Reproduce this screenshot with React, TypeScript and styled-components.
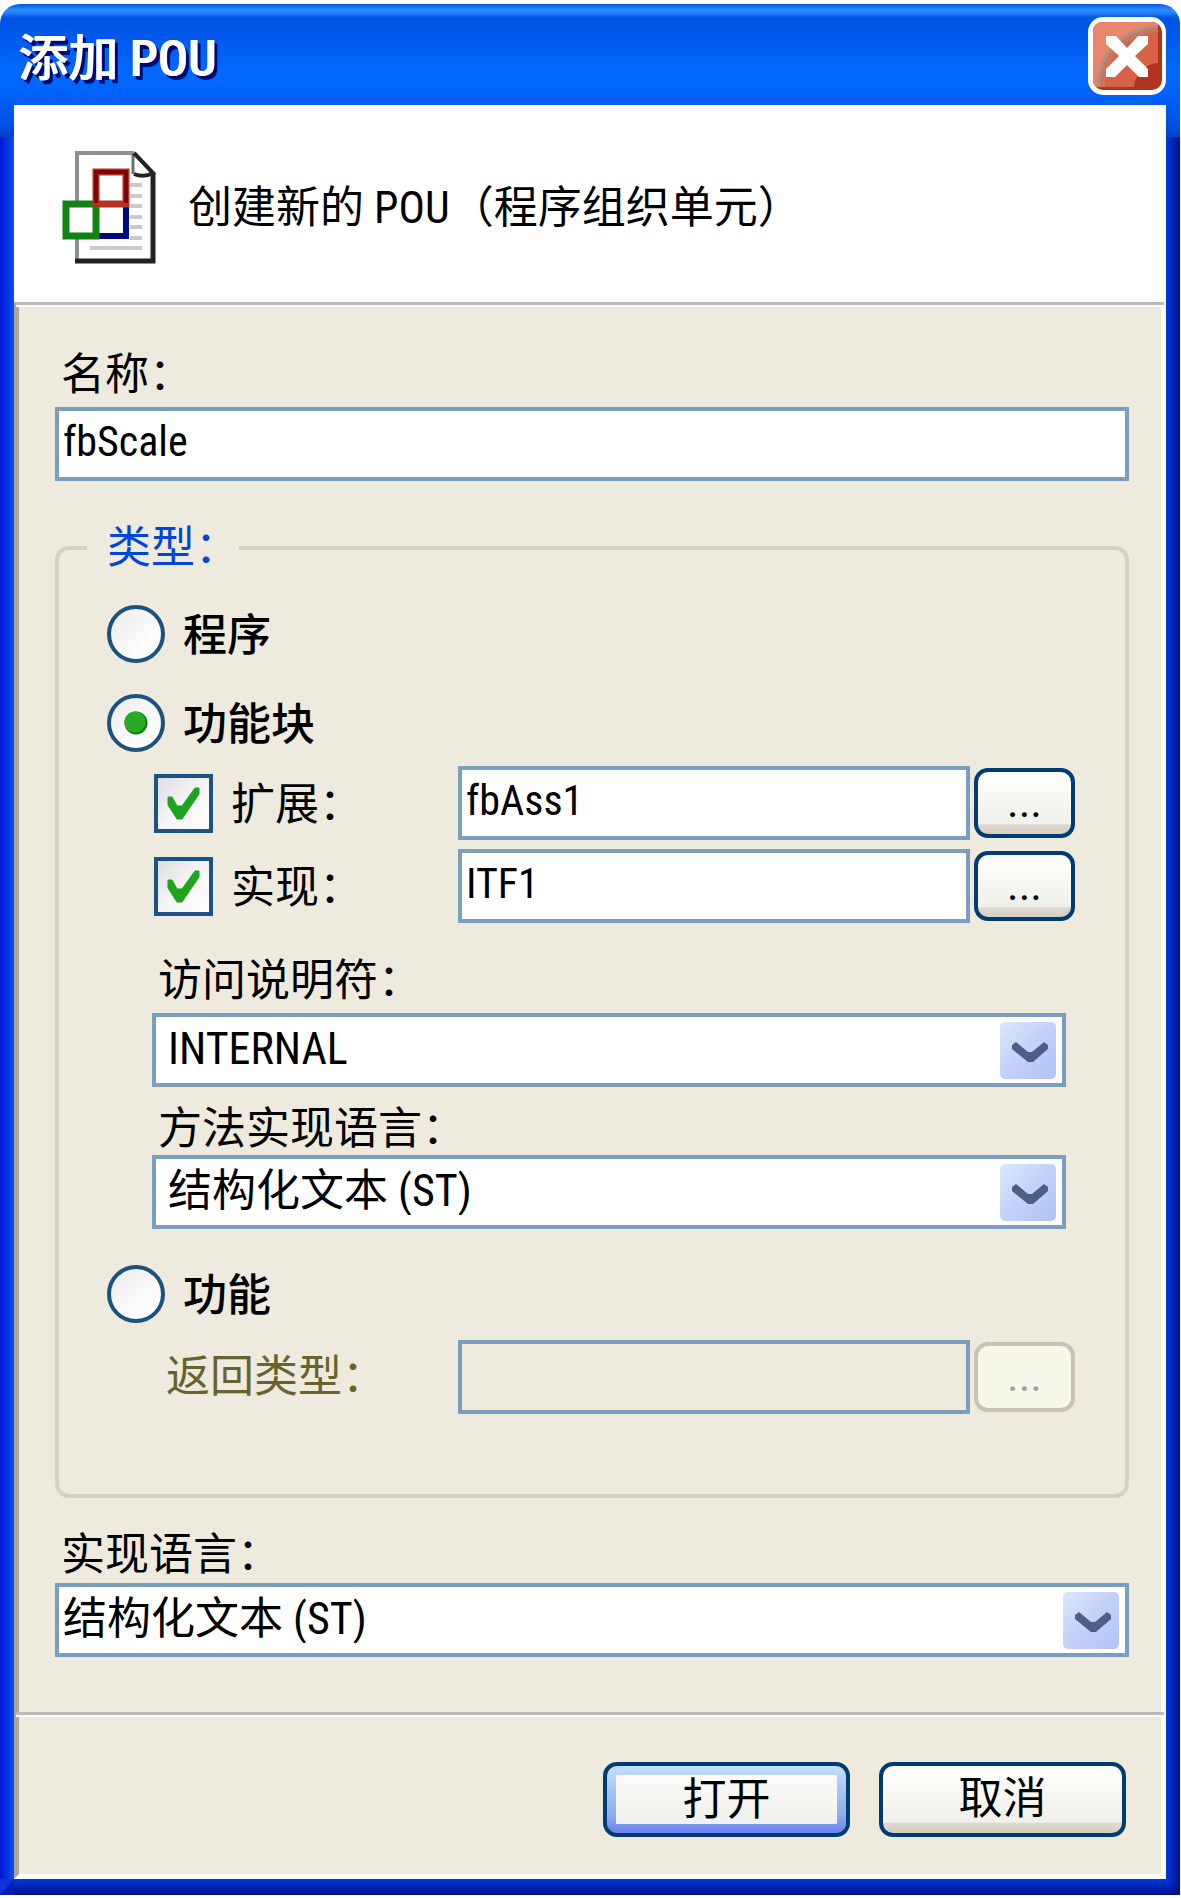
import React, { useState } from "react";
import styled, { createGlobalStyle, css } from "styled-components";

const font = `"Roboto Condensed", "Liberation Sans", "Noto Sans CJK SC", sans-serif`;
const fieldBlue = "#7a9ebf";
const face = "#eeeade";

const GlobalStyle = createGlobalStyle`
  *, *::before, *::after { box-sizing: border-box; }
  body { margin: 0; background: #fff; }
  button, input, select { font: inherit; color: inherit; margin: 0; }
`;

const Page = styled.main`
  padding: 4px 1px 4px 0;
  font-family: ${font};
  font-size: 44px;
  line-height: 48px;
  color: #000;
`;

const Window = styled.section`
  padding: 0 14px 16px;
  border-radius: 20px 20px 0 0;
  background:
    linear-gradient(#0058e6, #2a8fff 6px, #2080fa 9px, #0054e3 14px, #0056e8 26px, #0068ff 66px, #0066ff 80px, #005cf2 101px, #0050e0 122px, #0040cc 133px) top / 100% 133px no-repeat,
    linear-gradient(to bottom right, #0a34da 50%, #0020b4 50%) left bottom / 14px 16px no-repeat,
    radial-gradient(circle at 0 0, #0038dc, #00108c 16px) right bottom / 14px 16px no-repeat,
    linear-gradient(#0038dc, #00108c) bottom / 100% 16px no-repeat,
    linear-gradient(90deg, #0016d6, #0d50e6) left / 14px 100% no-repeat,
    linear-gradient(90deg, #0038dc, #00108c) right / 14px 100% no-repeat;
`;

const TitleBar = styled.header`
  display: flex;
  align-items: center;
  justify-content: space-between;
  height: 101px;
  padding: 3px 0 0 4px;
`;

const Title = styled.h1`
  margin: 0;
  padding-top: 6px;
  font-size: 50px;
  line-height: 60px;
  font-weight: 500;
  color: #fff;
  text-shadow: 1px 0 0 #fff, 3px 3px 0 #000a70, 4px 4px 0 #000a70;
`;

const CloseButton = styled.button`
  display: block;
  width: 78px;
  height: 78px;
  padding: 0;
  border: 0;
  background: none;
  svg { display: block; }
`;

const Banner = styled.div`
  display: flex;
  align-items: center;
  gap: 32px;
  padding: 46px 48px 37px;
  background: #fff;
`;

const BannerText = styled.p`
  margin: 0;
`;

const Panel = styled.form`
  border: 5px solid #fff;
  border-left-color: #aca899;
  border-top: 0;
  background: ${face};
`;

const Divider = styled.hr`
  height: 5px;
  margin: 0 -3px;
  border: 0;
  border-top: 3px solid #bababa;
  background: #fff;
`;

const Body = styled.div`
  padding: 42px 32px 55px 36px;
`;

const FieldLabel = styled.label<{ $gap: number }>`
  display: block;
  padding: 2px 0 0 6px;
  margin-bottom: ${p => p.$gap}px;
`;

const TextInput = styled.input`
  display: block;
  width: 100%;
  min-width: 0;
  height: 74px;
  padding: 0 4px 6px;
  border: 4px solid ${fieldBlue};
  border-radius: 0;
  background: #fff;
  font-size: 42px;
  outline: none;
  &:disabled { background: transparent; }
`;

const SelectBox = styled.div`
  display: grid;
  align-items: center;
  > * { grid-area: 1 / 1; }
  svg {
    justify-self: end;
    margin-right: 10px;
    pointer-events: none;
  }
`;

const Select = styled.select<{ $inset: number }>`
  appearance: none;
  width: 100%;
  height: 74px;
  padding: 0 80px 2px ${p => p.$inset}px;
  border: 4px solid ${fieldBlue};
  border-radius: 0;
  background: #fff;
  outline: none;
`;

const TypeGroup = styled.fieldset`
  min-width: 0;
  margin: 43px 0 31px;
  padding: 33px 50px 80px 48px;
  border: 4px solid #d3d3bf;
  border-radius: 14px;
`;

const Legend = styled.legend`
  margin-left: -20px;
  padding: 0 0 0 20px;
  color: #0046d5;
`;

const Choice = styled.label<{ $strong?: boolean }>`
  display: inline-flex;
  align-items: center;
  gap: 18px;
  ${p => p.$strong && css`font-weight: 500;`}
`;

const ChoiceText = styled.span`
  padding-top: 4px;
`;

const ChoiceLine = styled.div<{ $before?: number; $after: number }>`
  display: flex;
  padding: ${p => p.$before || 0}px 0 ${p => p.$after}px;
`;

const Radio = styled.input`
  appearance: none;
  width: 58px;
  height: 58px;
  border: 4px solid #1b527e;
  border-radius: 50%;
  background: linear-gradient(135deg, #ebebed, #fafafa 55%, #fff);
  &:checked {
    background:
      radial-gradient(circle at 24px 24px, #27ab27 10px, transparent 11px),
      radial-gradient(circle, #0c800c 11px, transparent 12px),
      linear-gradient(135deg, #ebebed, #fafafa 55%, #fff);
  }
`;

const TickFrame = styled.span`
  display: grid;
  > * { grid-area: 1 / 1; }
  svg { pointer-events: none; }
`;

const TickInput = styled.input`
  appearance: none;
  width: 59px;
  height: 59px;
  border: 4px solid #1d5285;
  background: linear-gradient(135deg, #dedee2, #f5f5f5 50%, #fff);
  &:not(:checked) + svg { visibility: hidden; }
`;

const Rows = styled.div`
  display: grid;
  gap: 9px;
  padding-left: 47px;
`;

const Row = styled.div`
  display: grid;
  grid-template-columns: 300px 1fr 101px;
  align-items: center;
  column-gap: 4px;
`;

const ReturnLabel = styled.label`
  padding-left: 12px;
  color: #68622f;
`;

const SelectField = styled.div<{ $before: number }>`
  margin: ${p => p.$before}px 9px 0 45px;
`;

const XpButton = styled.button<{ $height: number }>`
  height: ${p => p.$height}px;
  padding: 0 0 2px;
  border: 4px solid #003c74;
  border-radius: 14px;
  background: linear-gradient(#fff, #fafaf6 25%, #f0f0eb 84%, #dfd8d0 85%, #d5cfc2) padding-box;
  &:disabled {
    border-color: #cac1b7;
    background: #f6f6ea;
    color: #9ba59b;
  }
`;

const ActionButton = styled(XpButton)<{ $primary?: boolean }>`
  width: 247px;
  ${p => p.$primary && css`
    padding: 9px;
    line-height: 44px;
    background:
      linear-gradient(#fbfbf9, #f0f0ec) content-box,
      linear-gradient(#c4e0ff, #a4c2f2 40%, #8cacec 75%, #6a80ee) padding-box;
  `}
`;

const Actions = styled.footer`
  display: flex;
  justify-content: flex-end;
  gap: 29px;
  padding: 45px 35px 37px;
`;

const CloseIcon = () => (
  <svg width="78" height="78" viewBox="0 0 78 78" aria-hidden="true">
    <rect width="78" height="78" rx="15" fill="#fff" />
    <rect x="5" y="5" width="69" height="68" rx="10" fill="#b0331e" />
    <path d="M15 5H64Q68 5 70 8V70H9Q5 68 5 63V15Q5 5 15 5Z" fill="#d86245" />
    <path d="M70 46C59 46 47 57 46 70H70Z" fill="#b0331e" />
    <path d="M15 5H64Q68 5 70 8C32 12 11 33 9 70Q5 68 5 63V15Q5 5 15 5Z" fill="#e9866d" />
    <path d="M70 12C36 16 16 36 14 70" fill="none" stroke="#cc7360" strokeWidth="6" />
    <path d="M70 9C33 13 12 34 10 70" fill="none" stroke="#b09078" strokeWidth="3" />
    <path d="M18 19H28L39 31 50 19H60V27L47 39 60 52V60H51L39 48 27 60H18V52L31 39 18 27Z" fill="#fff" />
  </svg>
);

const PouIcon = () => (
  <svg width="94" height="114" viewBox="0 0 94 114" aria-hidden="true">
    <path d="M15 2H72L91 22V110H15Z" fill="#fff" />
    <path d="M15 110V2H72" fill="none" stroke="#8d9093" strokeWidth="4" />
    <path d="M71 3V23" stroke="#6d7073" strokeWidth="3" />
    <path d="M13 110H91V22" fill="none" stroke="#222" strokeWidth="5" />
    <path d="M72 2L91 22Q82 27 72 23" fill="none" stroke="#222" strokeWidth="4" />
    <path d="M68 34H80M68 45H80M68 55H80M68 66H80M68 76H80M68 87H80M28 97H80" stroke="#c8cacd" strokeWidth="4" />
    <rect x="36" y="54" width="28" height="31" fill="#fff" />
    <path d="M36 85H64V54" fill="none" stroke="#000a80" strokeWidth="6" />
    <rect x="4" y="53" width="30" height="32" fill="#fff" stroke="#128212" strokeWidth="7" />
    <rect x="34" y="21" width="30" height="32" fill="#fff" stroke="#b5301f" strokeWidth="7" />
    <path d="M64 52V21H34V52" fill="none" stroke="#7c0505" strokeWidth="4" />
  </svg>
);

const TickIcon = () => (
  <svg width="59" height="59" viewBox="0 0 59 59" aria-hidden="true">
    <path d="M14 23H18L23 32H28L41 14H45V20L28 45H23L14 31Z" fill="#1fa31f" stroke="#1fa31f" />
  </svg>
);

const ArrowIcon = () => (
  <svg width="56" height="57" viewBox="0 0 56 57" aria-hidden="true">
    <defs>
      <linearGradient id="arrowFace" x1="0" y1="0" x2="1" y2="1">
        <stop offset="0" stopColor="#dbe8fb" />
        <stop offset="0.5" stopColor="#c3d1fa" />
        <stop offset="1" stopColor="#b2c2f5" />
      </linearGradient>
    </defs>
    <rect width="56" height="57" rx="5" fill="url(#arrowFace)" />
    <path d="M16 20L28 30H32L44 20L48 23V27L33 40H28L12 27V23Z" fill="#4b5f87" />
  </svg>
);

type DropDownProps = { id: string; inset: number; value: string; options: string[] };

const DropDown = ({ id, inset, value, options }: DropDownProps) => (
  <SelectBox>
    <Select id={id} $inset={inset} defaultValue={value}>
      {options.map(o => <option key={o}>{o}</option>)}
    </Select>
    <ArrowIcon />
  </SelectBox>
);

type OptionRowProps = { label: string; name: string; value: string };

const OptionRow = ({ label, name, value }: OptionRowProps) => (
  <Row>
    <Choice>
      <TickFrame>
        <TickInput type="checkbox" defaultChecked />
        <TickIcon />
      </TickFrame>
      <ChoiceText>{label}</ChoiceText>
    </Choice>
    <TextInput aria-label={name} defaultValue={value} />
    <XpButton type="button" $height={70}>...</XpButton>
  </Row>
);

export default function App() {
  const [kind, setKind] = useState("block");
  const radio = (value: string, text: string) => (
    <Choice $strong>
      <Radio type="radio" name="kind" checked={kind === value} onChange={() => setKind(value)} />
      <ChoiceText>{text}</ChoiceText>
    </Choice>
  );

  return (
    <>
      <GlobalStyle />
      <Page>
        <Window>
          <TitleBar>
            <Title>添加 POU</Title>
            <CloseButton type="button" aria-label="关闭"><CloseIcon /></CloseButton>
          </TitleBar>
          <Banner>
            <PouIcon />
            <BannerText>创建新的 POU（程序组织单元）</BannerText>
          </Banner>
          <Panel onSubmit={e => e.preventDefault()}>
            <Divider />
            <Body>
              <FieldLabel htmlFor="name" $gap={8}>名称：</FieldLabel>
              <TextInput id="name" defaultValue="fbScale" />

              <TypeGroup>
                <Legend>类型：</Legend>
                <ChoiceLine $after={31}>{radio("program", "程序")}</ChoiceLine>
                <ChoiceLine $after={14}>{radio("block", "功能块")}</ChoiceLine>
                <Rows>
                  <OptionRow label="扩展：" name="扩展" value="fbAss1" />
                  <OptionRow label="实现：" name="实现" value="ITF1" />
                </Rows>
                <SelectField $before={32}>
                  <FieldLabel htmlFor="access" $gap={8}>访问说明符：</FieldLabel>
                  <DropDown id="access" inset={12} value="INTERNAL" options={["INTERNAL", "PUBLIC", "PRIVATE", "PROTECTED"]} />
                </SelectField>
                <SelectField $before={16}>
                  <FieldLabel htmlFor="method" $gap={2}>方法实现语言：</FieldLabel>
                  <DropDown id="method" inset={12} value="结构化文本 (ST)" options={["结构化文本 (ST)"]} />
                </SelectField>
                <ChoiceLine $before={36} $after={17}>{radio("function", "功能")}</ChoiceLine>
                <Rows>
                  <Row>
                    <ReturnLabel htmlFor="returns">返回类型：</ReturnLabel>
                    <TextInput id="returns" disabled />
                    <XpButton type="button" $height={70} disabled>...</XpButton>
                  </Row>
                </Rows>
              </TypeGroup>

              <FieldLabel htmlFor="language" $gap={4}>实现语言：</FieldLabel>
              <DropDown id="language" inset={4} value="结构化文本 (ST)" options={["结构化文本 (ST)"]} />
            </Body>
            <Divider />
            <Actions>
              <ActionButton type="submit" $height={75} $primary>打开</ActionButton>
              <ActionButton type="button" $height={75}>取消</ActionButton>
            </Actions>
          </Panel>
        </Window>
      </Page>
    </>
  );
}
